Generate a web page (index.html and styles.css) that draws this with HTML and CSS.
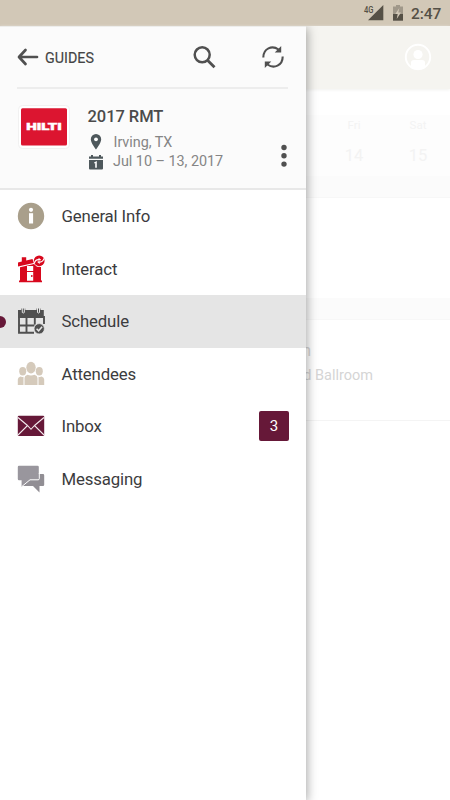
FILE: index.html
```html
<!DOCTYPE html>
<html lang="en">
<head>
<meta charset="utf-8">
<title>Guides</title>
<link rel="stylesheet" href="styles.css">
</head>
<body>
<div class="screen">
  <header class="status">
    <svg class="signal" width="20" height="20" viewBox="0 0 20 20"><text x="0" y="8" textLength="9.5" lengthAdjust="spacingAndGlyphs" class="net">4G</text><path d="M19.300 5v15.300H4z" fill="#555046"/></svg>
    <svg class="battery" width="10" height="16" viewBox="0 0 10 16"><path d="M3 0h4v1.500h3V9H0V1.500h3z" fill="#a0988a"/><path d="M0 9h10v6.700H0z" fill="#555046"/><path d="M6.300 3 2.300 9h2.400l-1 5L8 7.600H5.300z" fill="#d2c8b7"/></svg>
    <span class="clock">2:47</span>
  </header>
  <main class="stage">
    <section class="page">
      <div class="appbar">
        <svg width="28" height="28" viewBox="0 0 28 28"><circle cx="14" cy="14" r="12.200" fill="none" stroke="#fff" stroke-width="1.900"/><circle cx="14" cy="11.500" r="4.600" fill="#fff"/><path d="M7 25v-5.200q0-2.800 3-2.800h8q3 0 3 2.800V25q-7 4-14 0z" fill="#fff"/></svg>
      </div>
      <div class="days">
        <div class="day"><span>Fri</span><b>14</b></div>
        <div class="day"><span>Sat</span><b>15</b></div>
      </div>
      <div class="band"></div>
      <div class="blank"></div>
      <div class="band second"></div>
      <div class="session">
        <div class="name">Registration</div>
        <div class="place">Grand Ballroom</div>
      </div>
    </section>
    <aside class="drawer">
      <div class="head">
        <div class="tools">
          <svg width="22" height="18" viewBox="0 0 22 18"><path d="M8.500 2 2 9l6.500 7M2.500 9H20" fill="none" stroke="#505050" stroke-width="2.700" stroke-linecap="round" stroke-linejoin="round"/></svg>
          <span class="back">GUIDES</span>
          <svg class="search" width="24" height="24" viewBox="0 0 24 24"><circle cx="10.200" cy="9.800" r="7.500" fill="none" stroke="#505050" stroke-width="2.500"/><path d="m15.500 15.200 7 7" stroke="#505050" stroke-width="2.800"/></svg>
          <svg class="sync" width="24" height="24" viewBox="0 0 24 24"><g fill="none" stroke="#505050" stroke-width="2.100"><path d="M2.300 12.500C2.300 3.500 11 -.2 17.500 4.500"/><path d="M21.700 11.500C21.700 20.500 13 24.200 6.500 19.500"/></g><path d="M20.200 1v6.500h-6.500zM3.800 23v-6.500h6.500z" fill="#505050"/></svg>
        </div>
        <div class="guide">
          <svg class="logo" width="52" height="44" viewBox="0 0 52 44"><rect x=".5" y=".5" width="51" height="43" rx="4" fill="#fff" stroke="#f1f1f1"/><rect x="3" y="3.300" width="46" height="37.200" rx="1.500" fill="#dc1530"/><text x="8.200" y="24.600" textLength="35.600" lengthAdjust="spacingAndGlyphs" class="brand">HILTI</text></svg>
          <div class="details">
            <h1>2017 RMT</h1>
            <div class="meta"><svg width="16" height="18" viewBox="0 0 16 18"><path d="M8 1a5.200 5.200 0 0 1 5.200 5.200C13.200 10 8 16.500 8 16.500S2.800 10 2.800 6.200A5.200 5.200 0 0 1 8 1z" fill="#4e585c"/><circle cx="8" cy="6.300" r="1.900" fill="#fff"/></svg><span class="city">Irving, TX</span></div>
            <div class="meta"><svg width="16" height="18" viewBox="0 0 16 18"><path d="M1 3.500h2V2h2v1.500h6V2h2v1.500h2v2.300H1zM1 6.900h14v8.600q0 1-1 1H2q-1 0-1-1z" fill="#4e585c"/><path d="M6.100 9.500 8.800 8v6.800H7.200V9.900l-1.100.500z" fill="#fff"/></svg><span class="date">Jul 10 – 13, 2017</span></div>
          </div>
          <svg class="more" width="6" height="24" viewBox="0 0 6 24" fill="#505050"><circle cx="3" cy="3.500" r="2.700"/><circle cx="3" cy="11.800" r="2.700"/><circle cx="3" cy="20.100" r="2.700"/></svg>
        </div>
      </div>
      <nav class="menu">
        <a class="item"><svg width="28" height="28" viewBox="0 0 28 28"><circle cx="14" cy="14" r="13.200" fill="#a99f8b"/><circle cx="14" cy="7.800" r="2.100" fill="#fff"/><path d="M12 11.200h4.100V21.500H12z" fill="#fff"/></svg><span class="label">General Info</span></a>
        <a class="item"><svg width="28" height="28" viewBox="0 0 28 28"><path d="M1 7.500 4.800 6.600V2.300h4.400v3.300l6.300-1.500 1.300 3.800L1 11.500zM3 12.300 17 9l3 2.800 4 .2v13.500h1v1.700H2v-1.700h1z" fill="#d8081d"/><circle cx="22.200" cy="5.800" r="5.400" fill="#d8081d"/><path d="M17.300 8.300q1.200-4 4.700-3.600M27 3.400q-1.200 4-4.700 3.600" fill="none" stroke="#fff" stroke-width="1.200"/><path d="M21.600 2.700v4l2.500-2zM22.700 5v4l-2.500-2z" fill="#fff"/><path d="M10 11h6.200v5H10zM10 17h6.200v8.800H10z" fill="#fff"/><circle cx="14.800" cy="21" r=".9" fill="#d8081d"/></svg><span class="label">Interact</span></a>
        <a class="item active"><svg width="28" height="28" viewBox="0 0 28 28"><path d="M1 3h3.300V1.500h4V3h11.200V1.500h4V3h3.300v6H1z" fill="#505050"/><path d="M5.300 1v4.500q1 1 2 0V1M20.500 1v4.500q1 1 2 0V1" fill="none" stroke="#e5e5e5" stroke-width="1"/><g fill="none" stroke="#505050" stroke-width="1.900"><path d="M2 10v15.800h15M1 10h26v7M2 18.500h15.500M9.500 11v14.500M17.800 11v6.500"/></g><circle cx="22.200" cy="21.800" r="5.200" fill="#505050" stroke="#e5e5e5" stroke-width=".8"/><path d="m19.600 21.800 2 2 3.500-4" fill="none" stroke="#e5e5e5" stroke-width="1.500"/></svg><span class="label">Schedule</span></a>
        <a class="item"><svg width="28" height="28" viewBox="0 0 28 28" fill="#d5cabb"><ellipse cx="14" cy="7.600" rx="4.700" ry="5.900"/><ellipse cx="5.700" cy="11.300" rx="3.500" ry="4.200"/><ellipse cx="22.300" cy="11.300" rx="3.500" ry="4.200"/><path d="M7.500 25v-7q0-2.200 3-3.200 3.500 1.600 7 0 3 1 3 3.200v7zM.8 25v-5.500q0-2 2.500-3 1.600.7 3.200.2V25zM27.200 25v-5.500q0-2-2.500-3-1.600.7-3.200.2V25z"/></svg><span class="label">Attendees</span></a>
        <a class="item"><svg width="28" height="28" viewBox="0 0 28 28"><rect x=".8" y="3.700" width="26.400" height="20.400" rx="1" fill="#661838"/><path d="m1 5.500 9.500 8M27 5.500l-9.500 8M1 23l9.500-9.500 3.500 3.800 3.500-3.800L27 23" fill="none" stroke="#f3e9ed" stroke-width="1.100"/></svg><span class="label">Inbox</span><span class="badge">3</span></a>
        <a class="item"><svg width="28" height="28" viewBox="0 0 28 28"><path d="M12 9h14q1.200 0 1.200 1.200v9.600q0 1.200-1.200 1.200h-3.500v6.500L16 21H5z" fill="#918e94"/><path d="M2 .8h18.500q1.300 0 1.300 1.300v11.800q0 1.300-1.300 1.300h-7.700L4.600 21.800V15.200H2Q.8 15.200.8 13.900V2.100Q.8.8 2 .8z" fill="#99969d"/><path d="M22.300 8v5.700q0 1.100-1.200 1.100H13L5 21.400" fill="none" stroke="#fff" stroke-width="1"/></svg><span class="label">Messaging</span></a>
      </nav>
    </aside>
  </main>
</div>
</body>
</html>
```

FILE: styles.css
```css
* { box-sizing: border-box; }
body { margin: 0; font-family: Roboto, sans-serif; }
svg { display: block; flex: none; overflow: visible; }
.screen { width: 450px; height: 800px; overflow: hidden; display: flex; flex-direction: column; background: #fff; }
.status { height: 26px; flex: none; background: #d2c8b7; display: flex; justify-content: flex-end; padding-right: 9px; color: #555046; }
.signal { margin-right: 9px; }
.net { font: 500 9px Roboto, sans-serif; fill: #555046; transform: translateY(4.500px); }
.battery { margin: 5px 8px 0 0; }
.clock { font-size: 15.500px; line-height: 28px; font-weight: 500; width: 30px; white-space: nowrap; letter-spacing: -.1px; }
.stage { position: relative; flex: 1; }
.page { height: 774px; background: #fff; }
.appbar { height: 63px; background: #f5f4f0; display: flex; justify-content: flex-end; padding: 17px 18px 0 0; box-shadow: 0 1px 3px #f1f1ef; }
.days { margin-top: 26px; height: 61px; background: #fdfdfd; padding-left: 322px; display: flex; color: #f3f3f3; }
.day { width: 64px; text-align: center; font-size: 11.500px; padding-top: 3px; }
.day span { display: block; line-height: 14px; }
.day b { display: block; font-size: 16.500px; font-weight: 400; line-height: 24px; margin-top: 12px; }
.band { height: 22px; background: #fbfbfb; border-bottom: 1px solid #f7f7f7; }
.blank { height: 100px; }
.session { height: 101px; border-bottom: 1px solid #f4f4f4; padding: 21px 77px 0 0; text-align: right; color: #d5d5d5; }
.name { font-size: 16px; line-height: 20px; padding-right: 62px; }
.place { font-size: 14.500px; line-height: 18px; margin-top: 6px; }
.drawer { position: absolute; inset: 0 auto 0 0; width: 306px; background: #fff; box-shadow: 1px 2px 10px rgba(0,0,0,.36); clip-path: inset(0 -20px 0 0); }
.head { height: 164px; background: #fbfbfb; border-top: 1px solid #ededeb; border-bottom: 2px solid #e8e8e8; }
.tools { height: 62px; margin: 0 18px 0 17px; border-bottom: 2px solid #ededed; display: flex; align-items: center; }
.back { font-size: 14.300px; color: #444; width: 52px; margin-left: 6px; padding-top: 1px; -webkit-text-stroke: .15px #444; }
.search { margin-left: 95px; }
.sync { margin-left: 45px; }
.guide { display: flex; padding: 16px 19px 0 18px; }
.details { flex: 1; padding: 1px 0 0 17.500px; }
h1 { margin: 0; font-size: 16.500px; line-height: 22px; font-weight: 500; color: #4b4b4b; letter-spacing: -.05px; }
.meta { display: flex; align-items: center; height: 20px; color: #858585; font-size: 14.400px; letter-spacing: -.03px; }
.meta svg { margin-left: .5px; }
.meta:nth-child(2) { margin-top: 4px; }
.meta:nth-child(3) { margin-top: -.5px; }
.city { margin-left: 9.500px; }
.date { margin-left: 9px; }
.more { margin-top: 39px; }
.item { position: relative; height: 52.500px; display: flex; align-items: center; padding: 0 17px 0 16.500px; color: #3c3c3e; font-size: 16.800px; }
.label { margin-left: 17px; letter-spacing: -.15px; }
.active { background: #e5e5e5; }
.active::before { content: ""; position: absolute; left: -6px; top: 20.500px; width: 12px; height: 12px; border-radius: 50%; background: #661838; }
.badge { margin-left: auto; width: 30px; height: 30px; border-radius: 2px; background: #661838; color: #fff; font-size: 15px; line-height: 31px; text-align: center; }
.brand { font: 900 8.500px Roboto, sans-serif; fill: #fff; stroke: #fff; stroke-width: .4px; }
```
